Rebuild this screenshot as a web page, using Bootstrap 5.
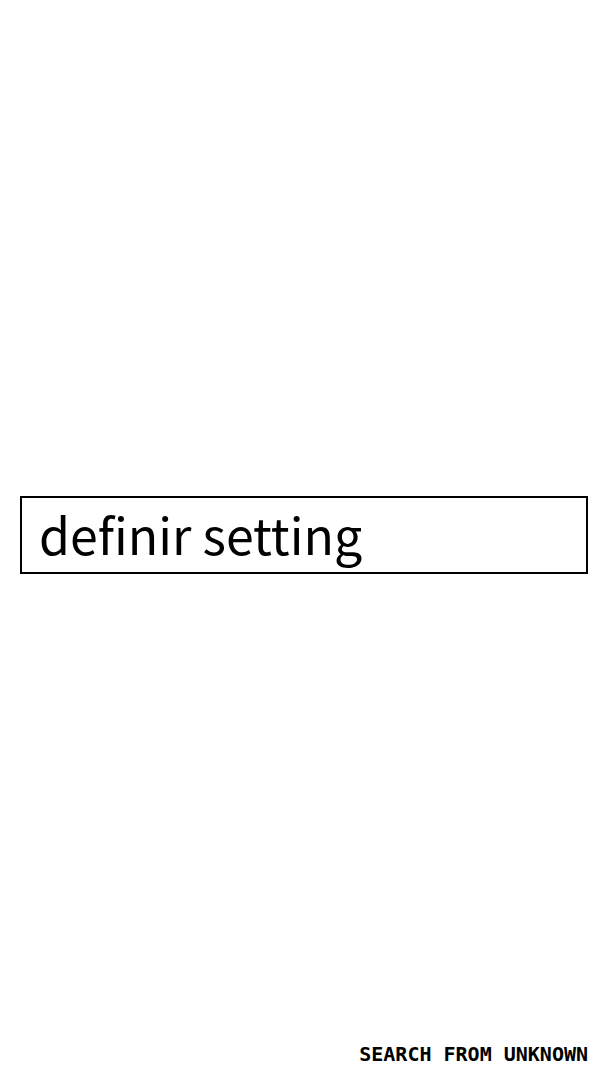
<!DOCTYPE html>
<html lang="en">
<head>
<meta charset="utf-8">
<meta name="viewport" content="width=device-width, initial-scale=1">
<title>Search from unknown</title>
<link rel="stylesheet" href="https://cdn.jsdelivr.net/npm/bootstrap@5.3.0/dist/css/bootstrap.min.css">
<style>
body { background: #fff; color: #000; }
.page { padding: 28px 20px 14px; }
.query, .query:focus {
  height: 78px; padding: 0 17px 4px; border: 2px solid #000; border-radius: 0;
  background: #fff; color: #000; box-shadow: none;
  font: 400 50px/70px "Noto Sans CJK SC", sans-serif;
}
.source { font: 700 20px/24px "DejaVu Sans Mono", monospace; }
</style>
</head>
<body>
<div class="page min-vh-100 d-flex flex-column">
  <main class="flex-grow-1 d-flex align-items-center">
    <form class="w-100" role="search">
      <input class="form-control query" type="text" name="q" value="definir setting" aria-label="Search">
    </form>
  </main>
  <footer class="source text-end text-uppercase">Search from unknown</footer>
</div>
<script src="https://cdn.jsdelivr.net/npm/bootstrap@5.3.0/dist/js/bootstrap.bundle.min.js"></script>
</body>
</html>
